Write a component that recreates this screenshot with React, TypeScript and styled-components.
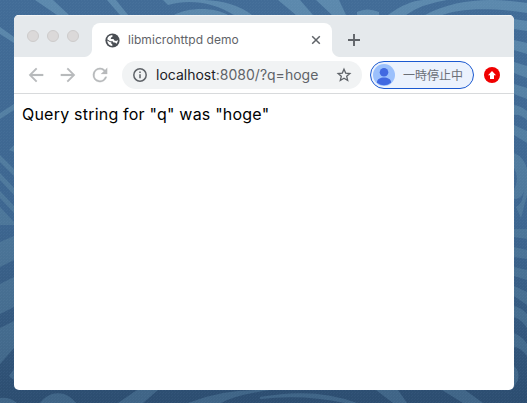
import React from "react";
import styled, { createGlobalStyle } from "styled-components";

const GlobalStyle = createGlobalStyle`
  * { box-sizing: border-box; }
  html, body, #root { margin: 0; height: 100%; }
  body { overflow: hidden; background: #3f678f; }
`;

const Desktop = styled.main`
  position: relative;
  width: 527px;
  height: 403px;
  padding: 15px 13px 13px 14px;
  overflow: hidden;
`;

const Wallpaper = styled.svg`
  position: absolute;
  inset: 0;
`;

const BrowserWindow = styled.section`
  position: relative;
  display: flex;
  flex-direction: column;
  width: 500px;
  height: 375px;
  border-radius: 5px;
  overflow: hidden;
  background: #fff;
  font-family: Inter, "Noto Sans CJK JP", sans-serif;
`;

const TabStrip = styled.header`
  display: flex;
  height: 42px;
  padding-top: 8px;
  background: #e5e9ec;
  box-shadow: inset 0 1px #f3f5f6;
`;

const WindowControls = styled.div`
  display: flex;
  gap: 8px;
  width: 78px;
  padding: 7px 0 0 13px;
`;

const ControlDot = styled.span`
  width: 12px;
  height: 12px;
  border: 1px solid #cdcbcb;
  border-radius: 50%;
  background: #dbd9d9;
`;

const Tab = styled.div`
  position: relative;
  display: flex;
  align-items: center;
  width: 240px;
  height: 34px;
  padding: 0 10px 0 13px;
  border-radius: 8px 8px 0 0;
  background: #fff;
  &::before, &::after {
    content: "";
    position: absolute;
    bottom: 0;
    width: 8px;
    height: 8px;
  }
  &::before {
    left: -8px;
    background: radial-gradient(circle at 0 0, transparent 7.5px, #fff 8.5px);
  }
  &::after {
    right: -8px;
    background: radial-gradient(circle at 100% 0, transparent 7.5px, #fff 8.5px);
  }
`;

const TabTitle = styled.span`
  flex: 1;
  margin-left: 8px;
  padding-bottom: 1px;
  font-size: 12px;
  letter-spacing: 0.06px;
  color: #5f6368;
  white-space: nowrap;
`;

const NewTab = styled.div`
  display: flex;
  align-items: center;
  height: 34px;
  margin-left: 15px;
`;

const Toolbar = styled.nav`
  display: flex;
  align-items: center;
  height: 37px;
  padding-left: 14px;
  border-bottom: 1px solid #d8dadc;
  background: #fff;
`;

const NavButtons = styled.div`
  display: flex;
  gap: 16px;
  width: 94px;
`;

const AddressBar = styled.div`
  display: flex;
  align-items: center;
  width: 240px;
  height: 28px;
  padding: 0 10px;
  border-radius: 14px;
  background: #f1f3f4;
`;

const Url = styled.span`
  flex: 1;
  margin-left: 8px;
  padding-bottom: 1px;
  font-size: 14px;
  letter-spacing: 0;
  color: #5f6368;
  white-space: nowrap;
`;

const Host = styled.span`
  color: #202124;
`;

const ProfileChip = styled.div`
  display: flex;
  align-items: center;
  gap: 8px;
  width: 104px;
  height: 28px;
  margin-left: 8px;
  padding-left: 2px;
  border: 1px solid #1b59d0;
  border-radius: 14px;
  background: #ebf2fd;
  color: #6b7078;
  font-family: "Noto Sans CJK JP", sans-serif;
  font-size: 12px;
  white-space: nowrap;
`;

const ProfileLabel = styled.span`
  padding-bottom: 2px;
`;

const UpdateBadge = styled.div`
  display: flex;
  margin-left: 10px;
`;

const PageContent = styled.article`
  padding: 8px;
  color: #000;
  font-size: 16px;
  line-height: 24px;
  white-space: nowrap;
`;

const PageText = styled.span`
  letter-spacing: 0.21px;
`;

function Waves() {
  return (
    <Wallpaper width="527" height="403" viewBox="0 0 527 403" aria-hidden="true">
      <defs>
        <linearGradient id="sea" x1="0" y1="0" x2="0" y2="1">
          <stop offset="0" stopColor="#426c97" />
          <stop offset=".55" stopColor="#3d6690" />
          <stop offset="1" stopColor="#2c4d70" />
        </linearGradient>
        <linearGradient id="foam" gradientUnits="userSpaceOnUse" x1="0" y1="0" x2="0" y2="403">
          <stop offset="0" stopColor="#5c89ad" />
          <stop offset=".55" stopColor="#4c7699" />
          <stop offset="1" stopColor="#3f6486" />
        </linearGradient>
        <pattern id="weave" width="3" height="3" patternUnits="userSpaceOnUse">
          <path d="M0 .5h1M1 2.5h1" stroke="#9cbcd5" strokeOpacity=".06" />
        </pattern>
      </defs>
      <rect width="527" height="403" fill="url(#sea)" />
      <g fill="url(#foam)">
        <path d="M35 0H53L69 15H57ZM107 0H116L128 15H120ZM163 0H196Q231 -1 252 15H234C213 2 189-1 168 5ZM174 15C189 7 214 7 228 15ZM278 0H300L313 15H296ZM316 0H339L346 15H332ZM357 12Q367 7 379 12V15H357ZM388 15C402 5 412 1 423 0H447Q421 4 406 15ZM425 15C454 0 487-3 527 3V13C482 6 457 10 442 15Z" />
        <path d="M0 27L14 37V43L0 34ZM0 113L14 104V110L0 119ZM9 150L14 145V152ZM0 155L14 169V176L0 162ZM0 173L14 188V195L0 180ZM0 191L14 206V213L0 198ZM0 207L14 222V225H0ZM0 242L14 236V260L0 267ZM0 284L14 277V307L0 314ZM0 328L14 321V348L0 364ZM9 376L14 369V380Z" />
        <path d="M40 403C50 390 66 390 76 403ZM118 403L137 390H158L143 403ZM188 403Q220 390 257 390H270Q235 395 221 403ZM260 397Q315 387 357 403H345Q303 394 260 399ZM376 390H398L407 403H393ZM442 390H465L483 403H463ZM0 398Q10 397 17 403H0Z" />
        <path d="M514 19L527 21V31L514 29ZM514 40L527 43V54L514 50ZM514 62L527 66V78L514 73ZM514 84L527 88V99L514 94ZM514 105Q521 106 527 111V120Q520 114 514 115ZM514 125L527 131V143L514 135ZM514 153Q524 157 527 169V195L521 218L516 207Q524 203 524 187Q524 199 514 199V190Q520 178 514 168ZM514 229H527V239L514 237ZM514 247L527 250V259L514 257ZM514 267L527 270V280L514 276ZM514 286L527 292V305L514 296ZM514 306Q522 308 527 314V328Q521 319 514 317ZM514 333Q523 337 527 344V356Q520 347 514 347ZM514 366Q520 371 518 380L514 387Z" />
      </g>
      <rect width="527" height="403" fill="url(#weave)" />
    </Wallpaper>
  );
}

function NavIcon({ kind }: { kind: "back" | "forward" | "reload" }) {
  const paths = {
    back: "M20 11H7.83l5.59-5.59L12 4l-8 8 8 8 1.41-1.41L7.83 13H20z",
    forward: "M12 4l-1.41 1.41L16.17 11H4v2h12.17l-5.58 5.59L12 20l8-8z",
    reload: "M17.65 6.35A7.96 7.96 0 0 0 12 4a8 8 0 1 0 7.73 10h-2.08A6 6 0 1 1 12 6c1.66 0 3.14.69 4.22 1.78L13 11h7V4z",
  };
  return (
    <svg width="16" height="16" viewBox="4 4 16 16" fill="#b8babc" stroke="#b8babc" strokeWidth=".2" overflow="visible">
      <path d={paths[kind]} transform="translate(12 12) scale(.9) translate(-12 -12)" />
    </svg>
  );
}

export default function App() {
  return (
    <>
      <GlobalStyle />
      <Desktop>
        <Waves />
        <BrowserWindow>
          <TabStrip>
            <WindowControls><ControlDot /><ControlDot /><ControlDot /></WindowControls>
            <Tab>
              <svg width="15" height="15" viewBox="0 0 15 15">
                <circle cx="7.5" cy="7.5" r="7.1" fill="#4a4e54" />
                <path d="M7.1 2.1C8.1 3.1 7.5 4.1 6.3 4.3L5.7 6H8.1Q9.2 6.1 9.3 7.5L11.2 7.9L12.8 7.1Q13.1 8.9 11.5 10.7L10.1 9.6H8.4L7.7 8.2H5.1L2.2 6.2Q3.1 2.7 7.1 2.1ZM2.1 7.6L5.3 9.2H6.3V10.7L7.3 11.3V12.9Q3 12.7 2.1 7.6Z" fill="#fff" />
              </svg>
              <TabTitle>libmicrohttpd demo</TabTitle>
              <svg width="12" height="12" viewBox="0 0 12 12" stroke="#5f6368" strokeWidth="1.5"><path d="M2.2 2.2l7.6 7.6M9.8 2.2l-7.6 7.6" /></svg>
            </Tab>
            <NewTab>
              <svg width="14" height="14" viewBox="0 0 14 14" stroke="#5f6368" strokeWidth="1.9"><path d="M7 1v12M1 7h12" /></svg>
            </NewTab>
          </TabStrip>
          <Toolbar>
            <NavButtons><NavIcon kind="back" /><NavIcon kind="forward" /><NavIcon kind="reload" /></NavButtons>
            <AddressBar>
              <svg width="16" height="16" viewBox="0 0 16 16" fill="none" stroke="#5f6368" strokeWidth="1.5">
                <circle cx="8" cy="8" r="6.2" /><path d="M8 7.2v4M8 4.5v1.6" />
              </svg>
              <Url><Host>localhost</Host>:8080/?q=hoge</Url>
              <svg width="16" height="16" viewBox="0 0 16 16" fill="none" stroke="#5f6368" strokeWidth="1.3">
                <path d="M8 2.2l1.7 3.9 4.2.4-3.2 2.8 1 4.2L8 11.3l-3.7 2.2 1-4.2-3.2-2.8 4.2-.4z" />
              </svg>
            </AddressBar>
            <ProfileChip>
              <svg width="22" height="22" viewBox="0 0 22 22">
                <circle cx="11" cy="11" r="11" fill="#9bc0fc" />
                <circle cx="11" cy="8.3" r="4.3" fill="#4169e1" />
                <path d="M4 18.8C3 11.7 19 11.7 18 18.8Q11 23.8 4 18.8Z" fill="#4169e1" />
              </svg>
              <ProfileLabel>一時停止中</ProfileLabel>
            </ProfileChip>
            <UpdateBadge>
              <svg width="16" height="16" viewBox="0 0 16 16">
                <circle cx="8" cy="8" r="8" fill="#f00000" /><path d="M8 4l4 4.3H10V12H6V8.3H4z" fill="#fff" />
              </svg>
            </UpdateBadge>
          </Toolbar>
          <PageContent><PageText>Query string for "q" was "hoge"</PageText></PageContent>
        </BrowserWindow>
      </Desktop>
    </>
  );
}
